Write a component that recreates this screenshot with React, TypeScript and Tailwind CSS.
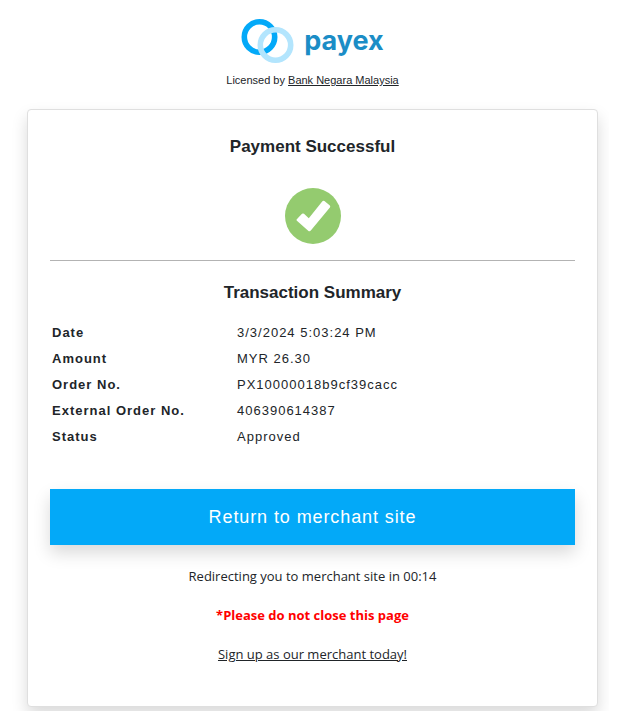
import React from "react";

const rows = [
  { label: "Date", value: "3/3/2024 5:03:24 PM" },
  { label: "Amount", value: "MYR 26.30" },
  { label: "Order No.", value: "PX10000018b9cf39cacc" },
  { label: "External Order No.", value: "406390614387" },
  { label: "Status", value: "Approved" },
];

function Logo() {
  return (
    <div className="flex items-center justify-center gap-[10px]">
      <svg className="h-[46px] w-[53px]" viewBox="0 0 53 46" fill="none" aria-hidden="true">
        <circle cx="18.5" cy="19" r="15.2" stroke="#03a9f8" strokeWidth="5.6" />
        <circle cx="34.5" cy="27" r="15.2" stroke="#b3e5fd" strokeWidth="5.6" />
      </svg>
      <span className="font-[family-name:Inter,sans-serif] text-[27px] leading-8 font-bold text-[#1b8dc6]">
        payex
      </span>
    </div>
  );
}

function CheckMark() {
  return (
    <svg className="mx-auto size-14" viewBox="0 0 56 56" aria-hidden="true">
      <circle cx="28" cy="28" r="28" fill="#94cb6f" />
      <path
        d="M11.8 31.2L17 25.8Q18 25 19 25.8L23.8 30.2L37.2 13.4Q38.2 12.2 39.4 13.1L44.6 17.2Q45.8 18.2 44.9 19.4L25.8 42.6Q24.6 44 23.2 42.8L11.9 32.8Q11 32 11.8 31.2Z"
        fill="#fff"
      />
    </svg>
  );
}

export default function App({ timeLeft = "00:14" }: { timeLeft?: string }) {
  return (
    <div className="min-h-screen bg-white font-['Liberation_Sans',Arial,sans-serif] text-[#212529]">
      <main className="mr-[21px] overflow-hidden pt-[18px] pr-[11px] pb-1 pl-[27px]">
        <header className="text-center">
          <Logo />
          <p className="mt-2 text-[11px] leading-4">
            Licensed by{" "}
            <a href="#" className="underline">
              Bank Negara Malaysia
            </a>
          </p>
        </header>

        <section className="mt-[21px] rounded-[4px] border border-[#dfdfdf] bg-white px-[22px] pt-[25px] pb-10 shadow-[0_8px_16px_rgba(0,0,0,0.15)]">
          <h1 className="text-center text-[17px] leading-6 font-bold">Payment Successful</h1>
          <div className="mt-[29px] border-b border-[#b3b3b3] pb-4">
            <CheckMark />
          </div>

          <h2 className="mt-5 text-center text-[17px] leading-6 font-bold">
            Transaction Summary
          </h2>
          <table className="mt-[15px] w-full table-fixed text-left text-[13px] tracking-[1px]">
            <tbody>
              {rows.map((row) => (
                <tr key={row.label} className="h-[26px]">
                  <th scope="row" className="w-[187px] pl-0.5 font-bold">
                    {row.label}
                  </th>
                  <td>{row.value}</td>
                </tr>
              ))}
            </tbody>
          </table>

          <button
            type="button"
            className="mt-[39px] h-14 w-full cursor-pointer bg-[#03a9f8] text-[18px] tracking-wider text-white shadow-[0_8px_16px_rgba(0,0,0,0.15)]"
          >
            Return to merchant site
          </button>

          <div className="mt-[19px] flex flex-col items-center gap-[15px] font-['Open_Sans','Noto_Sans',sans-serif] text-[13px] leading-6">
            <p>Redirecting you to merchant site in {timeLeft}</p>
            <p className="font-bold text-[#ff0000]">*Please do not close this page</p>
            <a href="#" className="underline">
              Sign up as our merchant today!
            </a>
          </div>
        </section>
      </main>
    </div>
  );
}
